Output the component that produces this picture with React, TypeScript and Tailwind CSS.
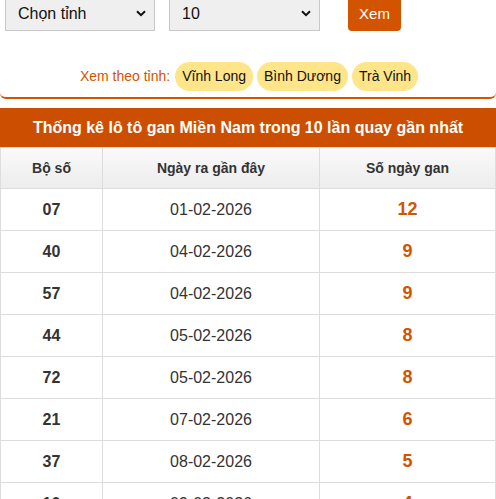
const rows = [
  { so: "07", ngay: "01-02-2026", gan: "12" },
  { so: "40", ngay: "04-02-2026", gan: "9" },
  { so: "57", ngay: "04-02-2026", gan: "9" },
  { so: "44", ngay: "05-02-2026", gan: "8" },
  { so: "72", ngay: "05-02-2026", gan: "8" },
  { so: "21", ngay: "07-02-2026", gan: "6" },
  { so: "37", ngay: "08-02-2026", gan: "5" },
  { so: "10", ngay: "09-02-2026", gan: "4" },
];

const tinh = ["Vĩnh Long", "Bình Dương", "Trà Vinh"];

const Chevron = () => (
  <svg width="10" height="7" viewBox="0 0 10 7" className="ml-auto">
    <path d="M1 1.2 5 5.2 9 1.2" fill="none" stroke="#111" strokeWidth="2" />
  </svg>
);

const App = () => {
  return (
    <div className="w-[496px] h-[499px] overflow-hidden bg-white font-['Liberation_Sans',Arial,sans-serif] text-[#333]">
      {/* bo loc */}
      <div className="rounded-b-[6px] border-b-2 border-[#d35400] pb-[6px]">
        <div className="-mt-[4px] flex items-center px-[5px]">
          <div className="flex h-[35px] w-[150px] items-center border border-[#c8c8c8] bg-[#efefef] pl-[12px] pr-[8px] text-[16px] text-[#111]">
            Chọn tỉnh
            <Chevron />
          </div>
          <div className="ml-[14px] flex h-[35px] w-[151px] items-center border border-[#c8c8c8] bg-[#efefef] pl-[12px] pr-[8px] text-[16px] text-[#111]">
            10
            <Chevron />
          </div>
          <div className="ml-[28px] flex h-[35px] w-[53px] items-center justify-center rounded-[4px] bg-[#d35400] pt-[2px] text-[15px] text-white">
            Xem
          </div>
        </div>
        <div className="mt-[31px] flex items-center justify-center gap-[4px] pl-[2px] text-[14px]">
          <span className="mr-[1px] text-[#d35400]">Xem theo tỉnh:</span>
          {tinh.map((t) => (
            <span key={t} className="rounded-full bg-[#ffe589] px-[7px] py-[4px] text-[#111]">
              {t}
            </span>
          ))}
        </div>
      </div>

      {/* bang thong ke */}
      <div className="mt-[9px]">
        <div className="flex h-[39px] items-center justify-center bg-[#cc4e00] text-[16px] font-bold text-white">
          Thống kê lô tô gan Miền Nam trong 10 lần quay gần nhất
        </div>
        <table className="w-full border-collapse text-center">
          <thead>
            <tr className="h-[41px] bg-gradient-to-b from-[#fafafa] to-[#ececec] text-[14px] font-bold">
              <th className="w-[102px] border border-[#ddd]">Bộ số</th>
              <th className="w-[217px] border border-[#ddd]">Ngày ra gần đây</th>
              <th className="border border-[#ddd]">Số ngày gan</th>
            </tr>
          </thead>
          <tbody>
            {rows.map((r, i) => (
              <tr key={i} className="h-[42px] text-[16px]">
                <td className="border border-[#ddd] font-bold">{r.so}</td>
                <td className="border border-[#ddd]">{r.ngay}</td>
                <td className="border border-[#ddd] text-[18px] font-bold text-[#d35400]">{r.gan}</td>
              </tr>
            ))}
          </tbody>
        </table>
      </div>
    </div>
  );
};

export default App;
